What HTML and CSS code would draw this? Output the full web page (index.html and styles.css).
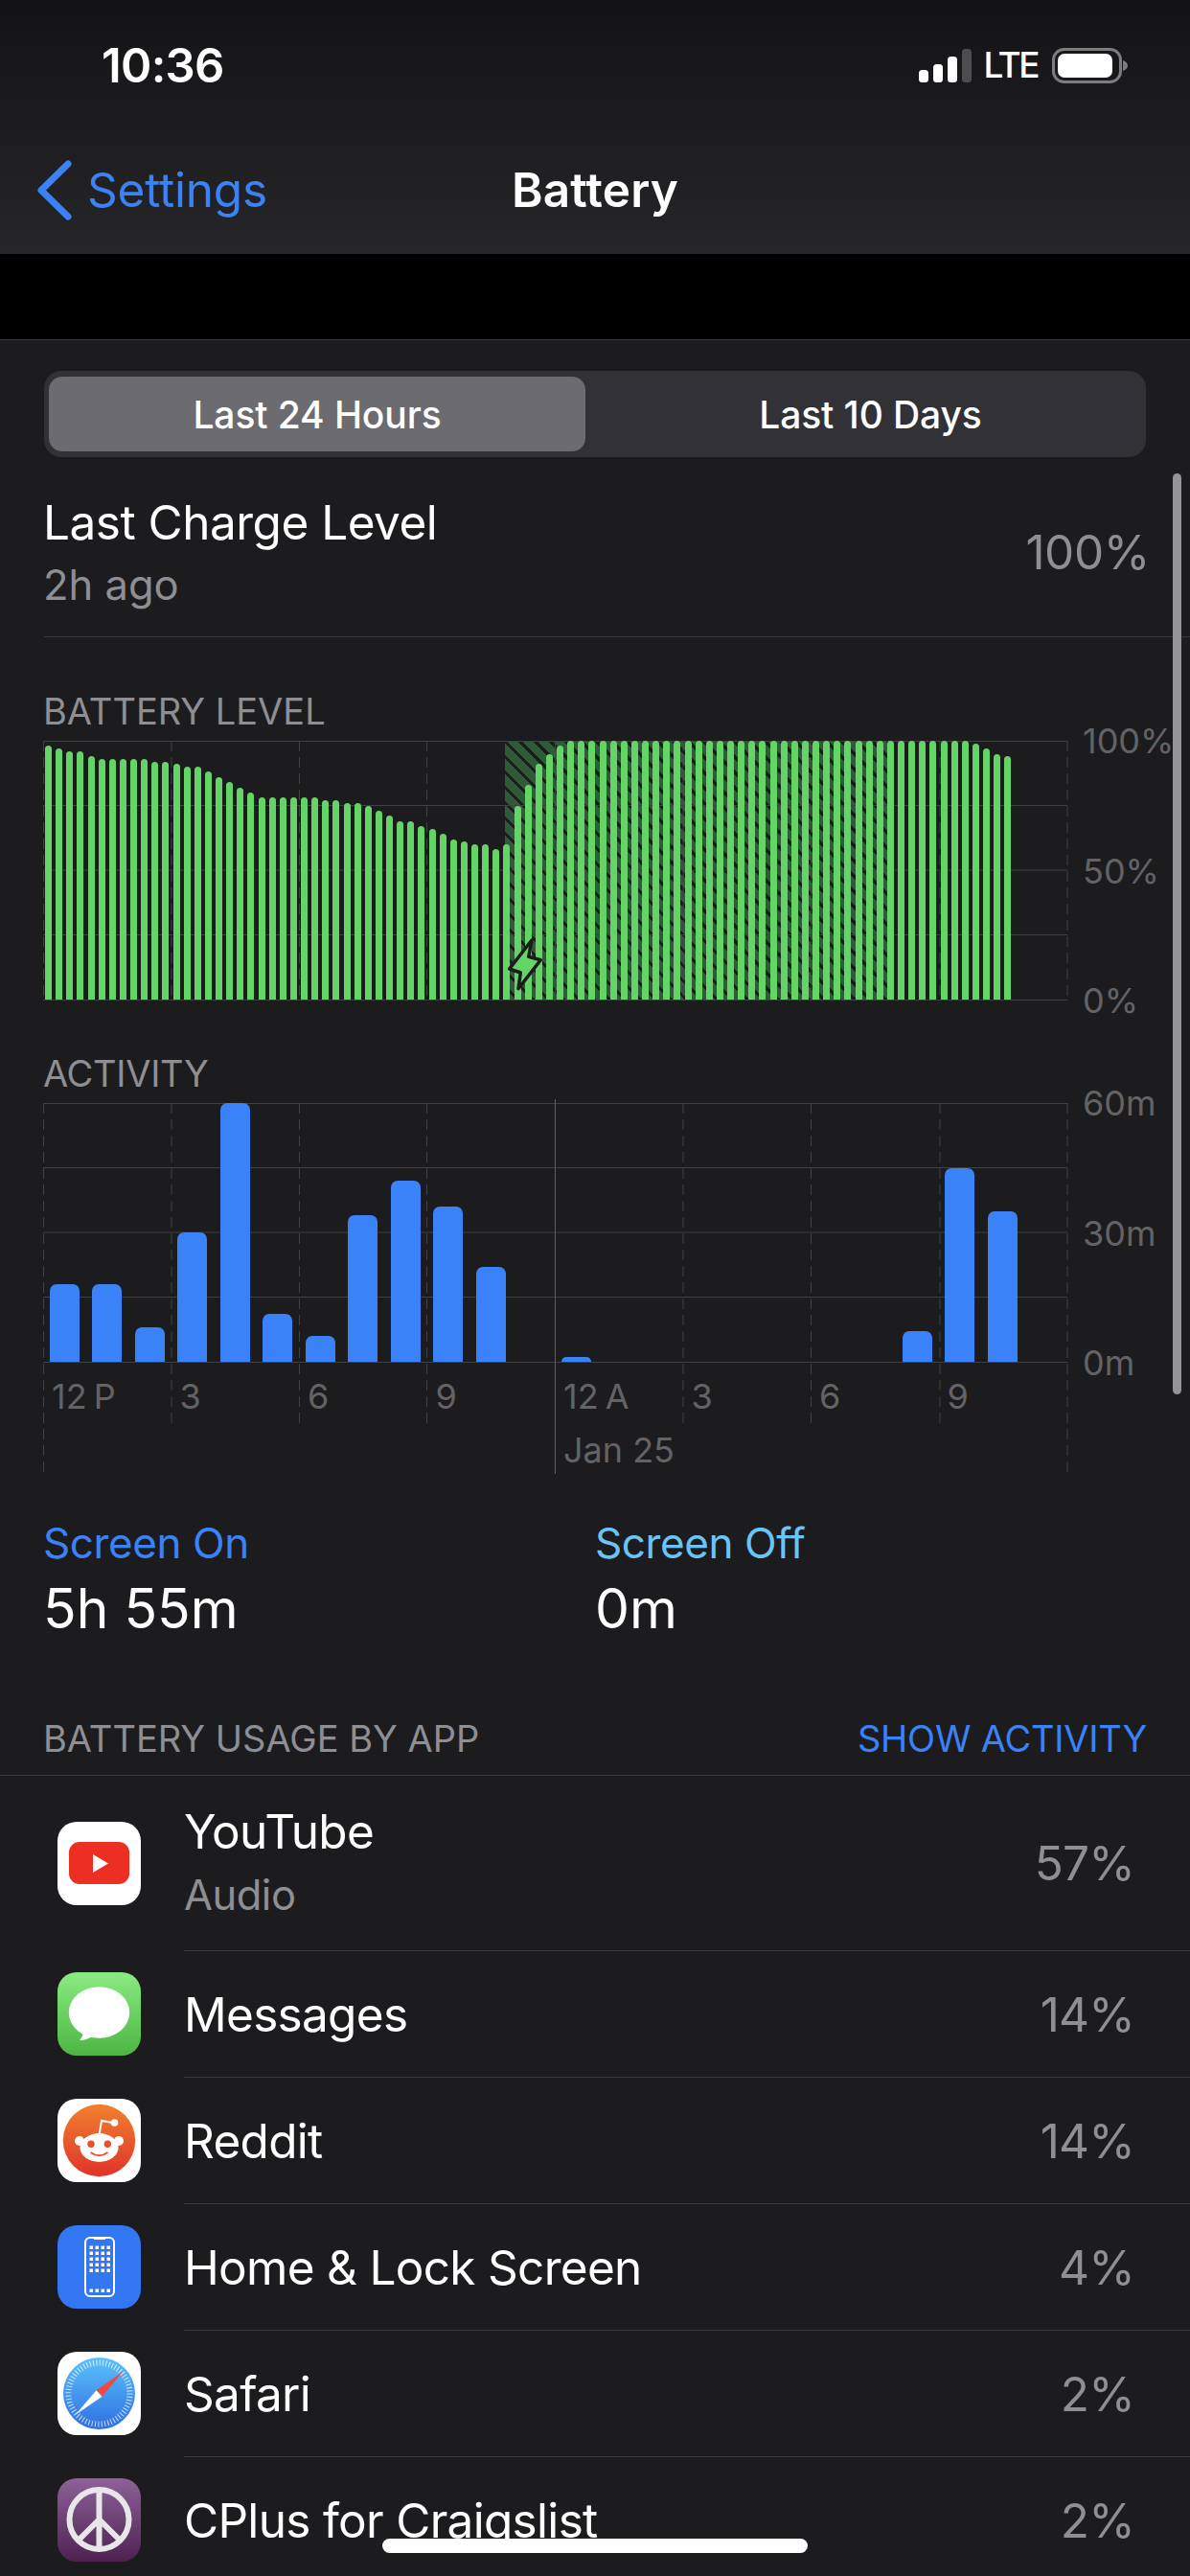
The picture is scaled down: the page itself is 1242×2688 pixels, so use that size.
FILE: index.html
```html
<!DOCTYPE html>
<html lang="en">
<head>
  <meta charset="UTF-8">
  <meta name="viewport" content="width=device-width, initial-scale=1.0">
  <title>Battery</title>
  <link rel="stylesheet" href="styles.css">
</head>
<body>

  <header class="top-bar">
    <div class="status-bar">
      <span class="time">10:36</span>
      <div class="status-icons">
        <svg class="signal" width="55" height="35" viewBox="0 0 55 35">
          <rect x="0" y="22" width="10" height="13" rx="3.5" fill="#fff"/>
          <rect x="15" y="16" width="10" height="19" rx="3.5" fill="#fff"/>
          <rect x="30" y="8" width="10" height="27" rx="3.5" fill="#fff"/>
          <rect x="45" y="0" width="10" height="35" rx="3.5" fill="#4d4d4f"/>
        </svg>
        <span class="lte">LTE</span>
        <svg class="battery" width="79" height="37" viewBox="0 0 79 37">
          <rect x="1.5" y="1.5" width="70" height="34" rx="11" fill="none" stroke="#7d7d7f" stroke-width="3"/>
          <rect x="6" y="6" width="57" height="25" rx="7" fill="#fff"/>
          <path d="M74 13 C77 14 79 16 79 18.500 C79 21 77 23 74 24 Z" fill="#7d7d7f"/>
        </svg>
      </div>
    </div>
    <nav class="nav-bar">
      <a class="back">
        <svg width="37" height="63" viewBox="0 0 37 63">
          <path d="M33 4 L5 31.500 L33 59" fill="none" stroke="#3a82f7" stroke-width="7" stroke-linecap="round" stroke-linejoin="round"/>
        </svg>
        Settings
      </a>
      <h1 class="title">Battery</h1>
    </nav>
  </header>
  <div class="black-strip"></div>

  <main>
    <!-- Range switch -->
    <div class="segmented">
      <div class="segment selected">Last 24 Hours</div>
      <div class="segment other">Last 10 Days</div>
    </div>

    <div class="charge-row">
      <div>
        <div class="charge-title">Last Charge Level</div>
        <div class="charge-sub">2h ago</div>
      </div>
      <div class="charge-value">100%</div>
    </div>

    <!-- Battery level chart -->
    <h2 class="section-title level-title">BATTERY LEVEL</h2>
    <div class="chart">
      <div class="plot">
        <div class="hatch"></div>
        <svg class="grid" width="1070" height="400">
          <g class="h-lines">
            <line x1="0" y1="0.5" x2="1069" y2="0.5"/>
            <line x1="0" y1="67.500" x2="1069" y2="67.500"/>
            <line x1="0" y1="135" x2="1069" y2="135"/>
            <line x1="0" y1="202.500" x2="1069" y2="202.500"/>
            <line x1="0" y1="270.500" x2="1069" y2="270.500"/>
          </g>
          <g class="v-lines">
            <line x1="0.5" y1="0" x2="0.5" y2="270"/>
            <line x1="134" y1="0" x2="134" y2="270"/>
            <line x1="267.500" y1="0" x2="267.500" y2="270"/>
            <line x1="400.500" y1="0" x2="400.500" y2="270"/>
            <line x1="534.500" y1="0" x2="534.500" y2="270"/>
            <line x1="668" y1="0" x2="668" y2="270"/>
            <line x1="801.500" y1="0" x2="801.500" y2="270"/>
            <line x1="936" y1="0" x2="936" y2="270"/>
            <line x1="1069" y1="0" x2="1069" y2="270"/>
          </g>
        </svg>
        <div class="bars level-bars">
          <div style="height:98%"></div><div style="height:97%"></div><div style="height:96%"></div><div style="height:96%"></div>
          <div style="height:94%"></div><div style="height:93%"></div><div style="height:93%"></div><div style="height:93%"></div>
          <div style="height:93%"></div><div style="height:93%"></div><div style="height:92%"></div><div style="height:92%"></div>
          <div style="height:91%"></div><div style="height:90%"></div><div style="height:90%"></div><div style="height:88%"></div>
          <div style="height:86%"></div><div style="height:84%"></div><div style="height:82%"></div><div style="height:80%"></div>
          <div style="height:78%"></div><div style="height:78%"></div><div style="height:78%"></div><div style="height:78%"></div>
          <div style="height:78%"></div><div style="height:78%"></div><div style="height:77%"></div><div style="height:77%"></div>
          <div style="height:76%"></div><div style="height:76%"></div><div style="height:75%"></div><div style="height:73%"></div>
          <div style="height:71%"></div><div style="height:69%"></div><div style="height:69%"></div><div style="height:67%"></div>
          <div style="height:66%"></div><div style="height:64%"></div><div style="height:62%"></div><div style="height:61%"></div>
          <div style="height:60%"></div><div style="height:60%"></div><div style="height:58%"></div><div style="height:60%"></div>
          <div style="height:75%"></div><div style="height:83%"></div><div style="height:91%"></div><div style="height:95%"></div>
          <div style="height:98%"></div><div style="height:100%"></div><div style="height:100%"></div><div style="height:100%"></div>
          <div style="height:100%"></div><div style="height:100%"></div><div style="height:100%"></div><div style="height:100%"></div>
          <div style="height:100%"></div><div style="height:100%"></div><div style="height:100%"></div><div style="height:100%"></div>
          <div style="height:100%"></div><div style="height:100%"></div><div style="height:100%"></div><div style="height:100%"></div>
          <div style="height:100%"></div><div style="height:100%"></div><div style="height:100%"></div><div style="height:100%"></div>
          <div style="height:100%"></div><div style="height:100%"></div><div style="height:100%"></div><div style="height:100%"></div>
          <div style="height:100%"></div><div style="height:100%"></div><div style="height:100%"></div><div style="height:100%"></div>
          <div style="height:100%"></div><div style="height:100%"></div><div style="height:100%"></div><div style="height:100%"></div>
          <div style="height:100%"></div><div style="height:100%"></div><div style="height:100%"></div><div style="height:100%"></div>
          <div style="height:100%"></div><div style="height:100%"></div><div style="height:100%"></div><div style="height:99%"></div>
          <div style="height:97%"></div><div style="height:95%"></div><div style="height:94%"></div>
        </div>
        <svg class="bolt" width="40" height="58" viewBox="0 0 40 58">
          <path d="M27 3 L3.700 33 L15.300 37 L13 53.700 L36.300 23.700 L23.700 20.300 Z" fill="#63d465" stroke="#1c1c1e" stroke-width="3.500" stroke-linejoin="round"/>
        </svg>
      </div>
      <div class="y-axis">
        <span>100%</span>
        <span>50%</span>
        <span>0%</span>
      </div>
    </div>

    <!-- Activity chart -->
    <h2 class="section-title activity-title">ACTIVITY</h2>
    <div class="chart">
      <div class="plot">
        <svg class="grid" width="1070" height="400">
          <g class="h-lines">
            <line x1="0" y1="0.5" x2="1069" y2="0.5"/>
            <line x1="0" y1="67.500" x2="1069" y2="67.500"/>
            <line x1="0" y1="135" x2="1069" y2="135"/>
            <line x1="0" y1="202.500" x2="1069" y2="202.500"/>
            <line x1="0" y1="270.500" x2="1069" y2="270.500"/>
          </g>
          <g class="v-lines">
            <line x1="0.5" y1="0" x2="0.5" y2="389"/>
            <line x1="134" y1="0" x2="134" y2="337"/>
            <line x1="267.500" y1="0" x2="267.500" y2="337"/>
            <line x1="400.500" y1="0" x2="400.500" y2="337"/>
            <line x1="668" y1="0" x2="668" y2="337"/>
            <line x1="801.500" y1="0" x2="801.500" y2="337"/>
            <line x1="936" y1="0" x2="936" y2="337"/>
            <line x1="1069" y1="0" x2="1069" y2="389"/>
          </g>
          <line class="midnight" x1="534.500" y1="-4" x2="534.500" y2="387"/>
        </svg>
        <div class="bars activity-bars">
          <div style="height:30%"></div><div style="height:30%"></div><div style="height:13.300%"></div><div style="height:50%"></div>
          <div style="height:100%"></div><div style="height:18.400%"></div><div style="height:10%"></div><div style="height:56.600%"></div>
          <div style="height:70%"></div><div style="height:60%"></div><div style="height:36.600%"></div><div></div>
          <div style="height:1.900%"></div><div></div><div></div><div></div>
          <div></div><div></div><div></div><div></div>
          <div style="height:11.700%"></div><div style="height:75%"></div><div style="height:58.300%"></div><div></div>
        </div>
      </div>
      <div class="y-axis">
        <span>60m</span>
        <span>30m</span>
        <span>0m</span>
      </div>
    </div>
    <div class="x-axis">
      <span>12 P</span>
      <span>3</span>
      <span>6</span>
      <span>9</span>
      <span>12 A<br><em class="date">Jan 25</em></span>
      <span>3</span>
      <span>6</span>
      <span>9</span>
    </div>

    <div class="screen-stats">
      <div>
        <div class="stat-label on">Screen On</div>
        <div class="stat-value">5h 55m</div>
      </div>
      <div>
        <div class="stat-label off">Screen Off</div>
        <div class="stat-value">0m</div>
      </div>
    </div>

    <div class="usage-header">
      <h2 class="section-title">BATTERY USAGE BY APP</h2>
      <a class="show-activity">SHOW ACTIVITY</a>
    </div>

    <!-- App list -->
    <ul class="app-list">
      <li class="app-row tall">
        <svg class="app-icon" width="87" height="87" viewBox="0 0 87 87">
          <rect width="87" height="87" rx="20" fill="#fff"/>
          <rect x="12" y="21" width="63" height="44" rx="11" fill="#ec2f22"/>
          <path d="M37 34 L53 43.500 L37 53 Z" fill="#fff"/>
        </svg>
        <div class="app-body">
          <div>
            <div class="app-name">YouTube</div>
            <div class="app-sub">Audio</div>
          </div>
          <span class="app-pct">57%</span>
        </div>
      </li>
      <li class="app-row">
        <svg class="app-icon" width="87" height="87" viewBox="0 0 87 87">
          <defs>
            <linearGradient id="msg-bg" x1="0" y1="0" x2="0" y2="1">
              <stop offset="0" stop-color="#8aeb82"/>
              <stop offset="1" stop-color="#4cb544"/>
            </linearGradient>
          </defs>
          <rect width="87" height="87" rx="20" fill="url(#msg-bg)"/>
          <ellipse cx="43.500" cy="42" rx="31.700" ry="26.700" fill="#fff"/>
          <path d="M27 58 Q28 66 23 71 Q31 71 38 66 Z" fill="#fff"/>
        </svg>
        <div class="app-body">
          <div class="app-name">Messages</div>
          <span class="app-pct">14%</span>
        </div>
      </li>
      <li class="app-row">
        <svg class="app-icon" width="87" height="87" viewBox="0 0 87 87">
          <defs>
            <linearGradient id="reddit-bg" x1="0" y1="0" x2="0" y2="1">
              <stop offset="0" stop-color="#f0802f"/>
              <stop offset="1" stop-color="#e0342a"/>
            </linearGradient>
          </defs>
          <rect width="87" height="87" rx="20" fill="#fff"/>
          <circle cx="43.500" cy="43.500" r="37.700" fill="url(#reddit-bg)"/>
          <path d="M43.500 38 L46 23 L58 25" fill="none" stroke="#fff" stroke-width="2"/>
          <circle cx="59.500" cy="25" r="3.800" fill="#fff"/>
          <circle cx="23" cy="44" r="5" fill="#fff"/>
          <circle cx="64" cy="44" r="5" fill="#fff"/>
          <ellipse cx="43.500" cy="51" rx="20" ry="15" fill="#fff"/>
          <circle cx="35" cy="47.300" r="3.700" fill="#e8502a"/>
          <circle cx="52.300" cy="47.300" r="3.700" fill="#e8502a"/>
          <path d="M34.500 56 Q43.500 62.500 52.500 56" fill="none" stroke="#e8502a" stroke-width="1.800"/>
        </svg>
        <div class="app-body">
          <div class="app-name">Reddit</div>
          <span class="app-pct">14%</span>
        </div>
      </li>
      <li class="app-row">
        <svg class="app-icon" width="87" height="87" viewBox="0 0 87 87">
          <rect width="87" height="87" rx="20" fill="#3477f2"/>
          <rect x="29" y="13" width="30" height="61" rx="5" fill="none" stroke="#fff" stroke-width="2"/>
          <rect x="38" y="13" width="12" height="2" fill="#fff"/>
          <g fill="#fff">
            <rect x="33.500" y="21.500" width="3.500" height="3.500"/><rect x="39.500" y="21.500" width="3.500" height="3.500"/><rect x="45.500" y="21.500" width="3.500" height="3.500"/><rect x="51.500" y="21.500" width="3.500" height="3.500"/>
            <rect x="33.500" y="27.500" width="3.500" height="3.500"/><rect x="39.500" y="27.500" width="3.500" height="3.500"/><rect x="45.500" y="27.500" width="3.500" height="3.500"/><rect x="51.500" y="27.500" width="3.500" height="3.500"/>
            <rect x="33.500" y="33.500" width="3.500" height="3.500"/><rect x="39.500" y="33.500" width="3.500" height="3.500"/><rect x="45.500" y="33.500" width="3.500" height="3.500"/><rect x="51.500" y="33.500" width="3.500" height="3.500"/>
            <rect x="33.500" y="39.500" width="3.500" height="3.500"/><rect x="39.500" y="39.500" width="3.500" height="3.500"/><rect x="45.500" y="39.500" width="3.500" height="3.500"/><rect x="51.500" y="39.500" width="3.500" height="3.500"/>
            <rect x="33.500" y="45.500" width="3.500" height="3.500"/><rect x="39.500" y="45.500" width="3.500" height="3.500"/><rect x="45.500" y="45.500" width="3.500" height="3.500"/><rect x="51.500" y="45.500" width="3.500" height="3.500"/>
            <rect x="33.500" y="66.500" width="3.500" height="3.500"/><rect x="39.500" y="66.500" width="3.500" height="3.500"/><rect x="45.500" y="66.500" width="3.500" height="3.500"/><rect x="51.500" y="66.500" width="3.500" height="3.500"/>
          </g>
        </svg>
        <div class="app-body">
          <div class="app-name">Home &amp; Lock Screen</div>
          <span class="app-pct">4%</span>
        </div>
      </li>
      <li class="app-row">
        <svg class="app-icon" width="87" height="87" viewBox="0 0 87 87">
          <defs>
            <linearGradient id="safari-bg" x1="0" y1="0" x2="0" y2="1">
              <stop offset="0" stop-color="#5cc1fb"/>
              <stop offset="1" stop-color="#2e6fe2"/>
            </linearGradient>
          </defs>
          <rect width="87" height="87" rx="20" fill="#fff"/>
          <circle cx="43.500" cy="43.500" r="37.500" fill="url(#safari-bg)"/>
          <circle cx="43.500" cy="43.500" r="32" fill="none" stroke="#fff" stroke-opacity="0.75" stroke-width="6" stroke-dasharray="1 2.351"/>
          <path d="M68.500 20.500 L40.500 40.200 L46.500 46.800 Z" fill="#ef4a3a"/>
          <path d="M18.500 66 L40.500 40.200 L46.500 46.800 Z" fill="#fff"/>
        </svg>
        <div class="app-body">
          <div class="app-name">Safari</div>
          <span class="app-pct">2%</span>
        </div>
      </li>
      <li class="app-row">
        <svg class="app-icon" width="87" height="87" viewBox="0 0 87 87">
          <defs>
            <linearGradient id="cplus-bg" x1="0" y1="0" x2="0" y2="1">
              <stop offset="0" stop-color="#8c6298"/>
              <stop offset="1" stop-color="#4e2150"/>
            </linearGradient>
          </defs>
          <rect width="87" height="87" rx="20" fill="url(#cplus-bg)"/>
          <g fill="none" stroke="#e9e6ea" stroke-width="6">
            <circle cx="43.500" cy="43" r="31"/>
            <path d="M43.500 12 V74 M43.500 43 L21.500 65 M43.500 43 L65.500 65"/>
          </g>
        </svg>
        <div class="app-body">
          <div class="app-name">CPlus for Craigslist</div>
          <span class="app-pct">2%</span>
        </div>
      </li>
    </ul>
  </main>

  <div class="scrollbar"></div>
  <div class="home-indicator"></div>

</body>
</html>
```

FILE: styles.css
```css
/* Universal Styles */
* { box-sizing: border-box; margin: 0; padding: 0; }

html, body { background: #1c1c1e; }

body {
  font-family: Inter, 'Noto Sans', sans-serif;
  width: 1242px;
  height: 2688px;
  overflow: hidden;
  position: relative;
  color: #fff;
}

/* Top Bar */
.top-bar {
  height: 265px;
  background: linear-gradient(180deg, #131315, #262628);
}

.status-bar {
  height: 136px;
  padding: 0 65px 0 106px;
  display: flex;
  justify-content: space-between;
  align-items: center;
}

.time { font-size: 49px; font-weight: 600; letter-spacing: -0.7px; }

.status-icons { display: flex; align-items: center; }
.lte { font-size: 37px; font-weight: 500; letter-spacing: -2.5px; margin: 0 15px 0 13px; line-height: 40px; }

.nav-bar {
  height: 124px;
  padding: 0 38px;
  display: grid;
  grid-template-columns: 1fr auto 1fr;
  align-items: center;
}

.back {
  display: flex;
  align-items: center;
  gap: 16px;
  color: #3a82f7;
  font-size: 49.500px;
  letter-spacing: -0.2px;
  grid-column: 1;
}

.title {
  grid-column: 2;
  font-size: 49.500px;
  font-weight: 600;
  letter-spacing: 0.2px;
}

.black-strip {
  height: 90px;
  background: #000;
  border-bottom: 1px solid #3a3a3c;
}

/* Segmented Control */
.segmented {
  margin: 32px 46px 0;
  height: 90px;
  padding: 6px 5px;
  display: flex;
  background: #313136;
  border-radius: 18px;
}

.segment {
  display: flex;
  align-items: center;
  justify-content: center;
  font-size: 39px;
  font-weight: 500;
  letter-spacing: -0.1px;
}

.segment.selected { width: 560px; background: #6b6b70; border-radius: 14px; }
.segment.other { flex: 1; margin-left: 15px; }

/* Last Charge */
.charge-row {
  margin: 33px 0 0 46px;
  padding: 0 42px 23px 0;
  display: flex;
  justify-content: space-between;
  align-items: center;
  border-bottom: 1px solid #3a3a3c;
}

.charge-title { font-size: 49.500px; line-height: 70px; letter-spacing: -0.5px; margin-left: -1px; }
.charge-sub { font-size: 43.500px; line-height: 61px; color: #8e8e93; margin-left: -1px; }
.charge-value { font-size: 49.500px; color: #8e8e93; letter-spacing: -0.4px; }

/* Charts */
.section-title {
  font-size: 38px;
  font-weight: 400;
  line-height: 56px;
  color: #8e8e93;
}

.level-title { margin: 49px 0 3px 45px; }
.activity-title { margin: 48px 0 3px 45px; letter-spacing: -0.3px; }

.chart { display: flex; margin-left: 45px; }

.plot { position: relative; width: 1068px; height: 271px; }

.hatch {
  position: absolute;
  top: 0;
  left: 482px;
  width: 399px;
  height: 270px;
  background: repeating-linear-gradient(45deg, #2f5b38 0, #2f5b38 8px, #1c1c1e 8px, #1c1c1e 11.300px);
}

.grid { position: absolute; top: 0; left: 0; overflow: visible; }
.h-lines line { stroke: #404042; stroke-width: 1; }
.v-lines line { stroke: #404042; stroke-width: 1; stroke-dasharray: 11 6; }
.midnight { stroke: #5e5e60; stroke-width: 1; }

.bars { position: relative; height: 270px; display: grid; align-items: end; justify-items: center; }
.level-bars { grid-template-columns: repeat(96, 1fr); }
.level-bars div { width: 7px; background: #63d465; border-radius: 3.500px 3.500px 0 0; }
.activity-bars { grid-template-columns: repeat(24, 1fr); }
.activity-bars div { width: 31px; background: #3a82f7; border-radius: 7px 7px 0 0; }

.bolt { position: absolute; top: 205px; left: 483px; }

.y-axis {
  margin: -20px 0 -20px 17px;
  display: flex;
  flex-direction: column;
  justify-content: space-between;
  font-size: 36px;
  line-height: 40px;
  color: #636366;
}

.x-axis {
  margin: 7px 0 0 45px;
  width: 1068px;
  height: 112px;
  display: grid;
  grid-template-columns: repeat(8, 1fr);
  font-size: 36px;
  line-height: 56px;
  color: #636366;
}

.x-axis span { padding-left: 9px; white-space: nowrap; word-spacing: -3px; }
.x-axis .date { font-style: normal; word-spacing: 0; }

/* Screen On / Off */
.screen-stats {
  margin: 39px 0 0 45px;
  display: grid;
  grid-template-columns: 576px 1fr;
}

.stat-label { font-size: 44px; line-height: 60px; letter-spacing: -0.4px; }
.stat-label.on { color: #3a82f7; }
.stat-label.off { color: #6ac4f7; }
.stat-value { font-size: 57px; line-height: 78px; }

/* App List */
.usage-header {
  margin-top: 68px;
  padding: 0 45px;
  padding-bottom: 10px;
  display: flex;
  justify-content: space-between;
  border-bottom: 1px solid #3a3a3c;
}

.show-activity { font-size: 38px; line-height: 56px; color: #3a82f7; letter-spacing: -0.2px; }

.app-list { list-style: none; }

.app-row {
  height: 132px;
  padding-left: 60px;
  display: flex;
  align-items: center;
}

.app-row.tall { height: 183px; }

.app-icon { flex: none; margin-bottom: 1px; }

.app-body {
  flex: 1;
  height: 100%;
  margin-left: 45px;
  padding-right: 58px;
  display: flex;
  justify-content: space-between;
  align-items: center;
  border-bottom: 1px solid #3a3a3c;
}

.app-name { font-size: 49.500px; line-height: 66px; letter-spacing: -0.7px; }
.app-sub { font-size: 43.500px; line-height: 66px; color: #8e8e93; letter-spacing: -0.5px; }
.app-pct { font-size: 49.500px; color: #8e8e93; letter-spacing: -0.8px; }

/* Overlays */
.scrollbar {
  position: absolute;
  top: 494px;
  left: 1224px;
  width: 9px;
  height: 961px;
  background: #949496;
  border-radius: 5px;
}

.home-indicator {
  position: absolute;
  left: 399px;
  bottom: 24px;
  width: 444px;
  height: 15px;
  background: #fff;
  border-radius: 8px;
}
```
